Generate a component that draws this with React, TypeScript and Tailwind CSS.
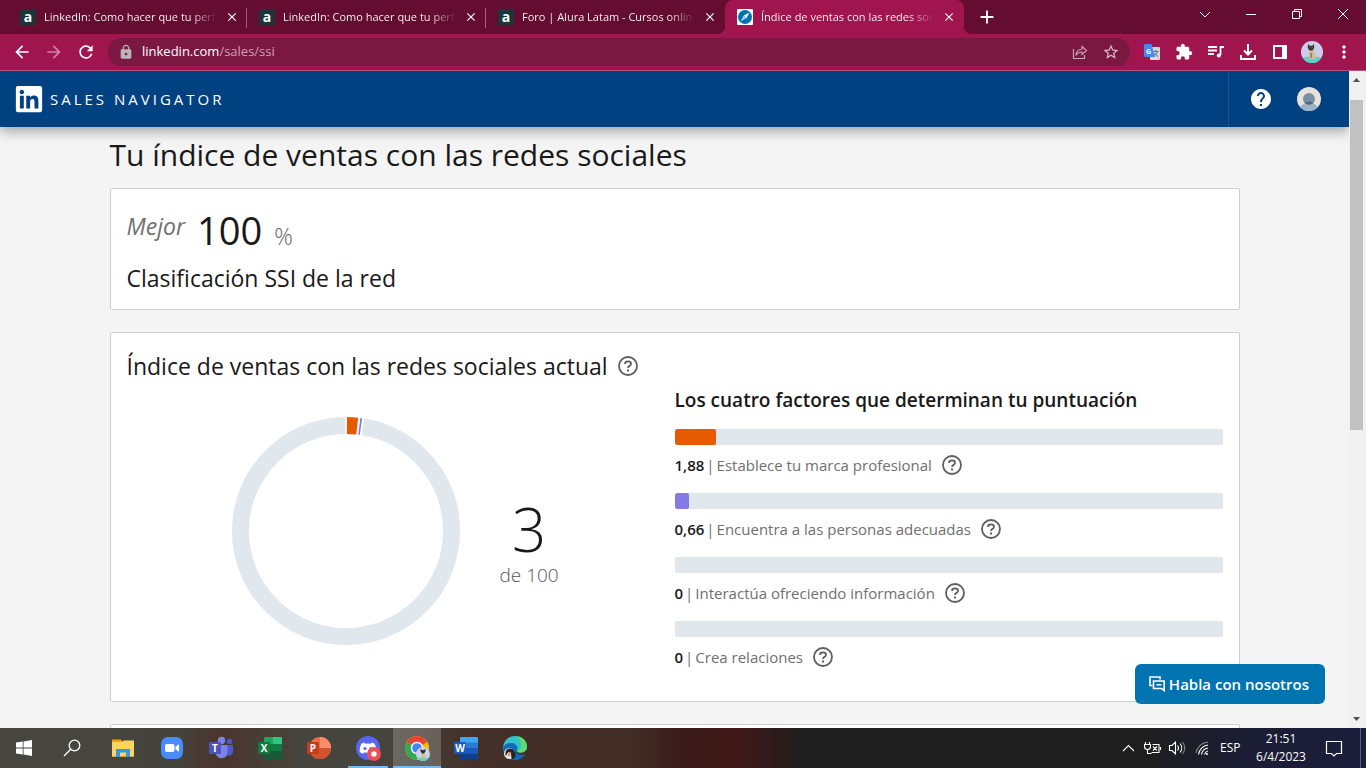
import type { ReactNode } from "react";
import { FaLinkedin } from "react-icons/fa";
import {
  MdAdd,
  MdArrowBack,
  MdArrowForward,
  MdClose,
  MdExtension,
  MdHelp,
  MdLock,
  MdMoreVert,
  MdRefresh,
  MdStarBorder,
} from "react-icons/md";

const TABS = [
  { title: "LinkedIn: Como hacer que tu perfil", icon: "alura" },
  { title: "LinkedIn: Como hacer que tu perfil", icon: "alura" },
  { title: "Foro | Alura Latam - Cursos online", icon: "alura" },
  { title: "Índice de ventas con las redes sociales", icon: "navigator", active: true },
];

const FACTORS = [
  { value: 1.88, label: "Establece tu marca profesional", fill: "bg-[#e65b00]" },
  { value: 0.66, label: "Encuentra a las personas adecuadas", fill: "bg-[#8579e6]" },
  { value: 0, label: "Interactúa ofreciendo información", fill: "bg-[#56687a]" },
  { value: 0, label: "Crea relaciones", fill: "bg-[#56687a]" },
];

const FACTOR_MAX = 25;

function AluraIcon() {
  return (
    <span className="flex size-4 shrink-0 items-center justify-center bg-[#1f333b] text-sm leading-4 font-bold text-white">
      a
    </span>
  );
}

function NavigatorIcon() {
  return (
    <svg viewBox="0 0 16 16" className="size-4 shrink-0">
      <rect width="16" height="16" rx="1" fill="#fff" />
      <circle cx="8" cy="8" r="7" fill="#0072b1" />
      <path d="M12.6 3.4 9.4 9.2 6.8 6.6z" fill="#fff" />
      <path d="M3.4 12.6 6.8 6.6l2.6 2.6z" fill="#9fd3ee" />
    </svg>
  );
}

function HelpIcon({ className }: { className: string }) {
  return (
    <svg viewBox="0 0 20 20" className={className} fill="none" stroke="#5e5e5e">
      <circle cx="10" cy="10" r="9" strokeWidth="1.8" />
      <path
        d="M7 7.9C7 6.3 8.3 5.4 10 5.4s3 .9 3 2.4c0 1.1-.7 1.6-1.5 2.1-.9.5-1.4.9-1.4 1.9v.2"
        strokeWidth="1.8"
      />
      <path d="M9 13.6h2v2H9z" fill="#5e5e5e" stroke="none" />
    </svg>
  );
}

function DogAvatar({ className }: { className: string }) {
  return (
    <svg viewBox="0 0 22 22" className={className}>
      <clipPath id="dog-clip">
        <circle cx="11" cy="11" r="11" />
      </clipPath>
      <g clipPath="url(#dog-clip)">
        <rect width="22" height="22" fill="#c9cfea" />
        <path d="M0 17c6-2 16-2 22 0v5H0z" fill="#55d3c8" />
        <path d="M8.5 8c-.6 3-1 6-1 10H13c2 0 3-1 2.500-3C15 12.500 13 11.500 12 8z" fill="#d3bd96" />
        <path d="m7 3 1.700 1.800h2.600L13 3l.2 4-1.700 2.500h-3L6.800 7z" fill="#3a302c" />
        <path d="M8.700 6.500h.8v.8h-.8zM10.700 6.500h.8v.8h-.8z" fill="#d3bd96" />
        <path d="M9.500 12h1.200v5H9.500z" fill="#7b684f" />
      </g>
    </svg>
  );
}

function BrowserTabs() {
  return (
    <div className="flex h-[34px] shrink-0 items-stretch bg-[#640d31] pl-2 text-white">
      <div className="flex min-w-0">
        {TABS.map((tab, i) => (
          <div
            key={i}
            className={`relative flex w-[239px] min-w-0 items-center gap-2 pr-2 pl-3 ${
              tab.active ? "rounded-t-lg bg-[#a0154e]" : ""
            }`}
          >
            {tab.icon === "alura" ? <AluraIcon /> : <NavigatorIcon />}
            <span className="min-w-0 flex-1 overflow-hidden bg-linear-to-r from-white from-85% to-transparent bg-clip-text text-[11px] whitespace-nowrap text-transparent">
              {tab.title}
            </span>
            <button aria-label="Cerrar pestaña" className="shrink-0">
              <MdClose className="size-3.5" />
            </button>
            {i < 2 && <span className="absolute top-2 right-0 h-5 w-px bg-[#a2617b]" />}
            {tab.active && (
              <>
                <span className="absolute bottom-0 -left-2 size-2 bg-[radial-gradient(circle_at_0_0,#640d31_8px,#a0154e_8px)]" />
                <span className="absolute -right-2 bottom-0 size-2 bg-[radial-gradient(circle_at_100%_0,#640d31_8px,#a0154e_8px)]" />
              </>
            )}
          </div>
        ))}
      </div>
      <button aria-label="Nueva pestaña" className="ml-3 flex items-center">
        <MdAdd className="size-[22px]" />
      </button>
      <div className="ml-auto flex">
        <WindowButton label="Buscar pestañas">
          <path d="m1 4 5 5 5-5" />
        </WindowButton>
        <WindowButton label="Minimizar">
          <path d="M1 6.5h10" />
        </WindowButton>
        <WindowButton label="Restaurar">
          <path d="M1.5 3.5h7v7h-7zM3.5 3.5v-2h7v7h-2" />
        </WindowButton>
        <WindowButton label="Cerrar">
          <path d="m1 1 10 10M11 1 1 11" />
        </WindowButton>
      </div>
    </div>
  );
}

function WindowButton({ label, children }: { label: string; children: ReactNode }) {
  return (
    <button aria-label={label} className="flex h-7 w-[46px] items-center justify-center">
      <svg viewBox="0 0 12 12" className="size-3" fill="none" stroke="#fff">
        {children}
      </svg>
    </button>
  );
}

function Toolbar() {
  return (
    <div className="flex h-[37px] shrink-0 items-center border-b border-[#b8507a] bg-[#a0154e] px-1.5 text-white">
      <button aria-label="Atrás" className="flex w-8 justify-center">
        <MdArrowBack className="size-5" />
      </button>
      <button aria-label="Adelante" className="flex w-8 justify-center text-[#cf85a4]">
        <MdArrowForward className="size-5" />
      </button>
      <button aria-label="Recargar" className="flex w-8 justify-center">
        <MdRefresh className="size-5" />
      </button>
      <div className="mx-1.5 flex h-7 flex-1 items-center rounded-full bg-[#7b1842] px-2.5">
        <MdLock className="size-4 text-[#b9b5b8]" />
        <a href="#ssi" className="ml-2 flex-1 text-[13px] text-[#cba2b3]">
          <span className="text-white">linkedin.com</span>/sales/ssi
        </a>
        <button aria-label="Compartir" className="mr-3.5">
          <svg viewBox="0 0 16 16" className="size-4" fill="none" stroke="#cba2b3" strokeWidth="1.2">
            <path d="M1.5 5v9.5h11V11" />
            <path d="M10 2.5 14.5 6.5 10 10.5V8c-3 0-4.5 1-6 3.5C4.3 7.5 6.5 5.3 10 5z" />
          </svg>
        </button>
        <button aria-label="Marcador">
          <MdStarBorder className="size-[18px] text-[#dcbccb]" />
        </button>
      </div>
      <button aria-label="Traducir" className="flex w-8 justify-center">
        <svg viewBox="0 0 16 16" className="size-4">
          <rect x="6" y="3" width="10" height="13" rx="1" fill="#d5d7da" />
          <path
            d="M9 7.5h5.5M11.7 6v1.5M13.5 7.5c-.5 2-2 3.5-3.5 4.5M10.5 9c.8 1.5 2 2.7 3.5 3.5"
            stroke="#5f7180"
            fill="none"
          />
          <path d="M1 0h6.5L11 13H1.5A1.5 1.5 0 0 1 0 11.5V1z" fill="#4688f1" />
          <text x="2" y="9.5" fontSize="7" fontWeight="700" fill="#fff">
            G
          </text>
        </svg>
      </button>
      <button aria-label="Extensiones" className="flex w-8 justify-center">
        <MdExtension className="size-[18px]" />
      </button>
      <button aria-label="Contenido multimedia" className="flex w-8 justify-center">
        <svg viewBox="0 0 16 16" className="size-4" fill="none" stroke="#fff" strokeWidth="1.8">
          <path d="M0 3h9M0 6.5h9M0 10h6M16 3h-3.5v8" />
          <circle cx="10.8" cy="11.5" r="2" fill="#fff" stroke="none" />
        </svg>
      </button>
      <button aria-label="Descargas" className="flex w-8 justify-center">
        <svg viewBox="0 0 16 16" className="size-4" fill="none" stroke="#fff" strokeWidth="2">
          <path d="M8 0v10M4 6.5l4 4 4-4M1 11v4h14v-4" />
        </svg>
      </button>
      <button aria-label="Panel lateral" className="flex w-8 justify-center">
        <svg viewBox="0 0 14 14" className="size-3.5">
          <path d="M0 0h14v14H0zM2 2v10h7V2z" fill="#fff" fillRule="evenodd" />
        </svg>
      </button>
      <button aria-label="Perfil" className="flex w-8 justify-center">
        <DogAvatar className="size-[22px]" />
      </button>
      <button aria-label="Menú" className="flex w-8 justify-center">
        <MdMoreVert className="size-5" />
      </button>
    </div>
  );
}

function SiteHeader() {
  return (
    <header className="relative flex h-14 shrink-0 items-center bg-[#004182] pl-3.5 text-white shadow-[0_4px_12px_rgba(0,0,0,0.35)]">
      <a href="#home" className="flex items-center gap-1.5">
        <FaLinkedin className="size-[30px]" />
        <span className="text-[15px] tracking-[3px]">SALES NAVIGATOR</span>
      </a>
      <div className="ml-auto flex h-full items-center gap-6 border-l border-[#1c558f] pr-7 pl-5">
        <button aria-label="Ayuda">
          <MdHelp className="size-6" />
        </button>
        <button aria-label="Cuenta">
          <svg viewBox="0 0 24 24" className="size-6">
            <clipPath id="account-clip">
              <circle cx="12" cy="12" r="12" />
            </clipPath>
            <g clipPath="url(#account-clip)">
              <rect width="24" height="24" fill="#e7e2dc" />
              <path d="M2 24c0-5 4-8 10-8s10 3 10 8z" fill="#9db3c8" />
              <circle cx="12" cy="12" r="6" fill="#788fa5" />
              <path d="M7.5 15.5c2.5-1 6.5-1 9 0a6 6 0 0 1-9 0z" fill="#56687a" />
            </g>
          </svg>
        </button>
      </div>
    </header>
  );
}

function ScoreRing() {
  return (
    <svg viewBox="0 0 228 228" className="size-[228px]" fill="none" strokeWidth="17">
      <g transform="rotate(-90 114 114)">
        <circle cx="114" cy="114" r="105.5" stroke="#e1e8ed" pathLength="360" strokeDasharray="350.3 9.7" strokeDashoffset="-9.2" />
        <circle cx="114" cy="114" r="105.5" stroke="#e65b00" pathLength="360" strokeDasharray="5.7 354.3" strokeDashoffset="-0.5" />
        <circle cx="114" cy="114" r="105.5" stroke="#8579e6" pathLength="360" strokeDasharray="0.9 359.1" strokeDashoffset="-7.3" />
      </g>
    </svg>
  );
}

function FactorRow({ value, label, fill }: { value: number; label: string; fill: string }) {
  return (
    <li className="mb-2">
      <div className="h-4 overflow-hidden rounded-xs bg-[#e1e8ed]">
        <div className={`h-full rounded-xs ${fill}`} style={{ width: `${(value / FACTOR_MAX) * 100}%` }} />
      </div>
      <div className="flex h-10 items-center text-[15px] text-[#707070]">
        <span className="font-semibold text-[#191919]">{value.toLocaleString("es")}</span>
        <span className="px-0.5">|</span>
        <span>{label}</span>
        <button aria-label={`Ayuda: ${label}`} className="ml-2.5">
          <HelpIcon className="size-5" />
        </button>
      </div>
    </li>
  );
}

function Page() {
  return (
    <div className="relative flex min-w-0 flex-1 flex-col overflow-hidden bg-[#f4f4f4]">
      <SiteHeader />
      <main className="mx-auto w-full max-w-[1130px] pt-2 text-[#191919]">
        <h1 className="mb-[13px] text-3xl leading-10">Tu índice de ventas con las redes sociales</h1>
        <div className="flex flex-col gap-[22px]">
          <section className="rounded-xs border border-[#cfcfcf] bg-white px-4 pt-[15px] pb-[15px]">
            <div className="flex h-[58px] items-baseline gap-3 leading-[52px]">
              <span className="self-start text-[23px] leading-[44px] text-[#707070] italic">Mejor</span>
              <span className="text-[38px]">100</span>
              <span className="text-[23px] font-light text-[#666]">%</span>
            </div>
            <h2 className="text-[23px] leading-8">Clasificación SSI de la red</h2>
          </section>
          <section className="rounded-xs border border-[#cfcfcf] bg-white px-4 pt-[17px] pb-4">
            <h2 className="flex items-center text-[23px] leading-8">
              Índice de ventas con las redes sociales actual
              <button aria-label="Ayuda" className="ml-2.5">
                <HelpIcon className="size-5" />
              </button>
            </h2>
            <div className="mt-1 grid grid-cols-2 items-start">
              <div className="mt-[31px] flex items-center gap-10 pl-[105px]">
                <ScoreRing />
                <div className="pt-5 text-center">
                  <div className="text-6xl leading-[68px] font-light">3</div>
                  <div className="text-[19px] leading-6 font-light text-[#555]">de 100</div>
                </div>
              </div>
              <div>
                <h3 className="mb-[15px] text-[19px] leading-7 font-semibold">
                  Los cuatro factores que determinan tu puntuación
                </h3>
                <ul>
                  {FACTORS.map((factor) => (
                    <FactorRow key={factor.label} {...factor} />
                  ))}
                </ul>
              </div>
            </div>
          </section>
          <section className="h-40 rounded-xs border border-[#cfcfcf] bg-white p-4" />
        </div>
      </main>
      <button className="absolute right-6 bottom-6 flex h-10 items-center gap-1 rounded-md bg-[#0073b1] pr-4 pl-3.5 text-[15px] font-semibold text-white">
        <svg viewBox="0 0 16 16" className="size-4" fill="none" stroke="#fff" strokeWidth="1.6">
          <path d="M3.5 9.5H1V1h10v2.5" />
          <path d="M4.5 5h10.7v9.5l-2.7-2h-8zM7.5 8.8h5" />
        </svg>
        Habla con nosotros
      </button>
    </div>
  );
}

function Scrollbar() {
  return (
    <div className="flex w-[17px] shrink-0 flex-col items-center bg-[#f1f1f1] pr-0.5">
      <svg viewBox="0 0 7 4" className="my-[7px] h-1 w-[7px]">
        <path d="M0 4 3.5 0 7 4z" fill="#505050" />
      </svg>
      <div className="mt-[11px] h-[330px] w-[13px] bg-[#c1c1c1]" />
      <svg viewBox="0 0 7 4" className="mt-auto mb-[7px] h-1 w-[7px]">
        <path d="M0 0h7L3.5 4z" fill="#505050" />
      </svg>
    </div>
  );
}

type TaskButtonProps = {
  label: string;
  state?: "idle" | "open" | "focused";
  children: ReactNode;
};

function TaskButton({ label, state = "idle", children }: TaskButtonProps) {
  return (
    <button
      aria-label={label}
      className={`relative flex h-full w-12 items-center justify-center ${state === "focused" ? "bg-white/20" : ""}`}
    >
      <svg viewBox="0 0 24 24" className="size-6 overflow-visible">
        {children}
      </svg>
      {state === "open" && <span className="absolute inset-x-1 bottom-0 h-0.5 bg-[#76b9ed]" />}
      {state === "focused" && <span className="absolute inset-x-0 bottom-0 h-0.5 bg-[#76b9ed]" />}
    </button>
  );
}

function OfficeBadge({ letter, color }: { letter: string; color: string }) {
  return (
    <>
      <rect y="6" width="12" height="12" rx="1" fill={color} />
      <text x="6" y="15.5" textAnchor="middle" fontSize="10" fontWeight="700" fill="#fff">
        {letter}
      </text>
    </>
  );
}

function Taskbar() {
  return (
    <footer className="flex h-10 shrink-0 items-center bg-[linear-gradient(90deg,#474640_0%,#45443c_13%,#4a352d_16%,#46453d_22%,#46453d_28%,#442f29_35%,#432d27_46%,#3b1b1a_50%,#411818_54%,#1e1e1e_59%,#1e1e1e_84%,#1b1d34_91%,#1c1f3c_100%)] text-white">
      <div className="flex h-full">
        <TaskButton label="Inicio">
          <path
            d="M4 6.5l6.7-1v6.1H4zM11.5 5.4 20 4v7.6h-8.5zM4 12.4h6.7v6.1L4 17.5zM11.5 12.4H20V20l-8.5-1.4z"
            fill="#fff"
          />
        </TaskButton>
        <TaskButton label="Buscar">
          <g fill="none" stroke="#fff" strokeWidth="1.3">
            <circle cx="14.5" cy="9.5" r="5.3" />
            <path d="M10.7 13.3 4 20" />
          </g>
        </TaskButton>
      </div>
      <div className="ml-[3px] flex h-full gap-px">
        <TaskButton label="Explorador de archivos">
          <path d="M1 3.5h9L11.5 6H23v14.5H1z" fill="#f0a30a" />
          <path d="M1 6h10l1.5-1.5H23v16H1z" fill="#fcd462" />
          <path d="M5 13h14v8h-4v-4.5H9V21H5z" fill="#3a96dd" />
        </TaskButton>
        <TaskButton label="Zoom">
          <rect x="1" y="1" width="22" height="22" rx="7" fill="#4a8cff" />
          <rect x="5" y="8" width="9.5" height="8" rx="2" fill="#fff" />
          <path d="m15.5 10.8 3.5-2.5v7.4l-3.5-2.5z" fill="#fff" />
        </TaskButton>
        <TaskButton label="Teams">
          <circle cx="20.5" cy="5.5" r="2.7" fill="#5059c9" />
          <circle cx="12.5" cy="4.5" r="3.7" fill="#7b83eb" />
          <path d="M16 9h8v6.5a4 4 0 0 1-6 3.5z" fill="#5059c9" />
          <path d="M7 9h11.5v7.5a6 6 0 0 1-11.5 2z" fill="#7b83eb" />
          <OfficeBadge letter="T" color="#4b53bc" />
        </TaskButton>
        <TaskButton label="Excel">
          <rect x="6" y="1" width="18" height="22" rx="1" fill="#21a366" />
          <path d="M15 1h8l1 1v6h-9z" fill="#33c481" />
          <path d="M6 8h9v7H6z" fill="#107c41" />
          <path d="M6 15h18v7l-1 1H6z" fill="#185c37" />
          <path d="M15 15h9V8h-9z" fill="#107c41" />
          <OfficeBadge letter="X" color="#107c41" />
        </TaskButton>
        <TaskButton label="PowerPoint">
          <circle cx="13" cy="12" r="11" fill="#ed6c47" />
          <path d="M13 1a11 11 0 0 1 11 11H13z" fill="#ff8f6b" />
          <path d="M2 12h22a11 11 0 0 1-22 0z" fill="#d35230" />
          <OfficeBadge letter="P" color="#c43e1c" />
        </TaskButton>
        <TaskButton label="Discord" state="open">
          <circle cx="12" cy="12" r="12" fill="#5865f2" />
          <path
            d="M8.5 6.5c-1.3.2-2.3.6-3 1C4 10 3.5 13 3.8 16c1.2 1 2.5 1.5 3.7 1.7l.9-1.5c2.2.8 5 .8 7.200 0l.9 1.5c1.2-.2 2.5-.7 3.7-1.7.3-3-.3-6-1.8-8.5-.7-.4-1.7-.8-3-1L15 7.8a14 14 0 0 0-6 0z"
            fill="#fff"
          />
          <circle cx="9" cy="12.5" r="1.6" fill="#5865f2" />
          <circle cx="15" cy="12.5" r="1.6" fill="#5865f2" />
          <circle cx="18" cy="18" r="7" fill="#ed4f55" />
          <circle cx="18" cy="18" r="2.7" fill="#fff" />
        </TaskButton>
        <TaskButton label="Chrome" state="focused">
          <circle cx="12" cy="12" r="12" fill="#fbbc05" />
          <path d="M12 12 1.6 6A12 12 0 0 1 22.4 6z" fill="#ea4335" />
          <path d="M12 12 1.6 6A12 12 0 0 0 12 24z" fill="#34a853" />
          <circle cx="12" cy="12" r="6.2" fill="#fff" />
          <circle cx="12" cy="12" r="4.8" fill="#4285f4" />
          <circle cx="18" cy="18" r="7" fill="#cdd2e8" />
          <path d="M12 21.5h12A7 7 0 0 1 18 25a7 7 0 0 1-6-3.5z" fill="#55d3c8" />
          <path d="M16.5 16.5h3l1.5 6h-5z" fill="#d3bd96" />
          <path d="m15.5 12.5 1.5 1.5h2l1.5-1.5v3l-1.5 2h-2l-1.5-2z" fill="#3a302c" />
        </TaskButton>
        <TaskButton label="Word">
          <rect x="6" y="1" width="18" height="22" rx="1" fill="#2b7cd3" />
          <path d="M6 2l1-1h16l1 1v4.5H6z" fill="#41a5ee" />
          <path d="M6 12h18v5.5H6z" fill="#185abd" />
          <path d="M6 17.5h18V22l-1 1H7l-1-1z" fill="#103f91" />
          <OfficeBadge letter="W" color="#185abd" />
        </TaskButton>
        <TaskButton label="Edge">
          <path
            d="M.2 11C1 4 6 0 12 0c7 0 12 5 12 10.5 0 4-3 6-6.5 6-3 0-4.5-1.5-3.5-3s0-4.5-4-4.5C6 9 2 10 .2 14z"
            fill="#35c1c9"
          />
          <path d="M14 .2c6 1 10 5 10 10.3 0 4-3 6-6.5 6-2 0-3-.5-3.7-1.5C20 13 19 5 14 .2z" fill="#5ddb6c" />
          <path d="M.2 14C0 9 4 6.5 9 7c4 .5 6 3.5 5 6.5-2 4 2 7 8.5 4.5C20 22 16 24 12 24 5 24 .5 20 .2 14z" fill="#0f6cc0" />
          <circle cx="6.5" cy="17.5" r="5.5" fill="#e8e4e2" />
          <path d="M3 20c-1.500-4 0-7 3.5-7.5 4-.5 6.500 3 6 8l-2 2.500h-2l-.5-6-2-1-1.500 1z" fill="#2c2421" />
          <path d="M5 16h2.500v4H5z" fill="#c99b84" />
        </TaskButton>
      </div>
      <div className="ml-auto flex h-full items-center text-xs">
        <svg viewBox="0 0 88 16" className="mr-3 h-4 w-[88px]" fill="none" stroke="#fff" strokeWidth="1.1">
          <path d="m3 11 5.500-5.500L14 11" />
          <path d="M25.5 2v2.5M29.5 2v2.5M24.5 4.5h6v2a3 3 0 0 1-6 0zM27.5 9.5v4h4" />
          <path d="M32.5 4.5H39v8h-7.5M40.5 7v3M33 6.5l4 4M37 6.5l-4 4" />
          <path d="M49.5 5.5H52L55.5 2v12L52 10.5h-2.5z" />
          <path d="M57.5 5.5a4 4 0 0 1 0 5M60 3.5a7 7 0 0 1 0 9" />
          <path d="M62.5 2a9.5 9.5 0 0 1 0 12" stroke="#888" />
          <path d="M78.5 14.5A11 11 0 0 1 88 5M81.5 14.5A8 8 0 0 1 88 8M84.5 14.5A5 5 0 0 1 88 11" />
          <path d="M76 13A13 13 0 0 1 88 2" stroke="#888" />
          <circle cx="87" cy="14" r="1" fill="#fff" stroke="none" />
        </svg>
        <span className="w-7">ESP</span>
        <div className="ml-0.5 w-[62px] text-center leading-[18px]">
          <div>21:51</div>
          <div>6/4/2023</div>
        </div>
        <button aria-label="Notificaciones" className="ml-1 flex w-9 justify-center">
          <svg viewBox="0 0 18 18" className="size-[18px]" fill="none" stroke="#fff" strokeWidth="1.2">
            <path d="M1.5 2.5h15v12h-5L9 17l-2.5-2.5h-5z" />
          </svg>
        </button>
        <span className="ml-2 h-full w-1.5 border-l border-[#5c5e70]" />
      </div>
    </footer>
  );
}

export default function App() {
  return (
    <div className="flex h-screen flex-col overflow-hidden font-['Segoe_UI','Open_Sans',sans-serif]">
      <BrowserTabs />
      <Toolbar />
      <div className="flex min-h-0 flex-1">
        <Page />
        <Scrollbar />
      </div>
      <Taskbar />
    </div>
  );
}
